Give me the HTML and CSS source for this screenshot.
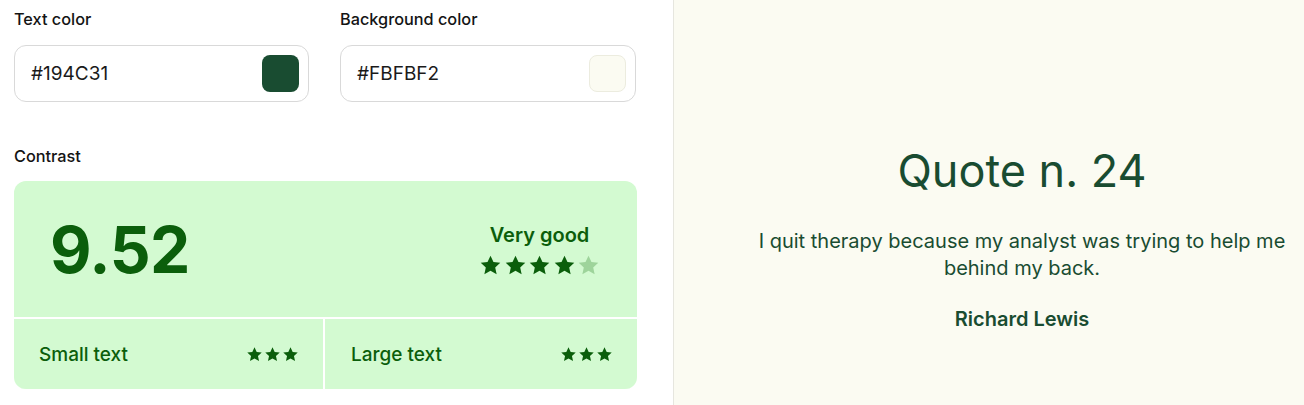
FILE: index.html
```html
<!DOCTYPE html>
<html>
<head>
<meta charset="utf-8">
<link rel="stylesheet" href="styles.css">
</head>
<body>
<div class="page">
  <section class="controls">
    <div class="fields">
      <div class="field">
        <label class="label">Text color</label>
        <div class="input">
          <span class="hex">#194C31</span>
          <span class="swatch swatch-text"></span>
        </div>
      </div>
      <div class="field">
        <label class="label">Background color</label>
        <div class="input">
          <span class="hex">#FBFBF2</span>
          <span class="swatch swatch-bg"></span>
        </div>
      </div>
    </div>
    <div class="label contrast-label">Contrast</div>
    <div class="card">
      <div class="card-top">
        <div class="ratio">9.52</div>
        <div class="rating">
          <div class="rating-text">Very good</div>
          <div class="stars big">
            <svg viewBox="0 0 24 24"><path d="M12 1.8l3.1 6.6 7.1.8-5.3 4.9 1.5 7.1L12 17.6l-6.4 3.6 1.5-7.1-5.3-4.9 7.1-.8z"/></svg>
            <svg viewBox="0 0 24 24"><path d="M12 1.8l3.1 6.6 7.1.8-5.3 4.9 1.5 7.1L12 17.6l-6.4 3.6 1.5-7.1-5.3-4.9 7.1-.8z"/></svg>
            <svg viewBox="0 0 24 24"><path d="M12 1.8l3.1 6.6 7.1.8-5.3 4.9 1.5 7.1L12 17.6l-6.4 3.6 1.5-7.1-5.3-4.9 7.1-.8z"/></svg>
            <svg viewBox="0 0 24 24"><path d="M12 1.8l3.1 6.6 7.1.8-5.3 4.9 1.5 7.1L12 17.6l-6.4 3.6 1.5-7.1-5.3-4.9 7.1-.8z"/></svg>
            <svg class="off" viewBox="0 0 24 24"><path d="M12 1.8l3.1 6.6 7.1.8-5.3 4.9 1.5 7.1L12 17.6l-6.4 3.6 1.5-7.1-5.3-4.9 7.1-.8z"/></svg>
          </div>
        </div>
      </div>
      <div class="card-bottom">
        <div class="cell">
          <span class="cell-text">Small text</span>
          <div class="stars small">
            <svg viewBox="0 0 24 24"><path d="M12 1.8l3.1 6.6 7.1.8-5.3 4.9 1.5 7.1L12 17.6l-6.4 3.6 1.5-7.1-5.3-4.9 7.1-.8z"/></svg>
            <svg viewBox="0 0 24 24"><path d="M12 1.8l3.1 6.6 7.1.8-5.3 4.9 1.5 7.1L12 17.6l-6.4 3.6 1.5-7.1-5.3-4.9 7.1-.8z"/></svg>
            <svg viewBox="0 0 24 24"><path d="M12 1.8l3.1 6.6 7.1.8-5.3 4.9 1.5 7.1L12 17.6l-6.4 3.6 1.5-7.1-5.3-4.9 7.1-.8z"/></svg>
          </div>
        </div>
        <div class="cell">
          <span class="cell-text">Large text</span>
          <div class="stars small">
            <svg viewBox="0 0 24 24"><path d="M12 1.8l3.1 6.6 7.1.8-5.3 4.9 1.5 7.1L12 17.6l-6.4 3.6 1.5-7.1-5.3-4.9 7.1-.8z"/></svg>
            <svg viewBox="0 0 24 24"><path d="M12 1.8l3.1 6.6 7.1.8-5.3 4.9 1.5 7.1L12 17.6l-6.4 3.6 1.5-7.1-5.3-4.9 7.1-.8z"/></svg>
            <svg viewBox="0 0 24 24"><path d="M12 1.8l3.1 6.6 7.1.8-5.3 4.9 1.5 7.1L12 17.6l-6.4 3.6 1.5-7.1-5.3-4.9 7.1-.8z"/></svg>
          </div>
        </div>
      </div>
    </div>
  </section>
  <section class="preview">
    <div class="preview-inner">
      <h1 class="title">Quote n. 24</h1>
      <p class="quote">I quit therapy because my analyst was trying to help me behind my back.</p>
      <p class="author">Richard Lewis</p>
    </div>
  </section>
</div>
</body>
</html>
```

FILE: styles.css
```css
* { box-sizing: border-box; }
html, body { margin: 0; padding: 0; }
body {
  font-family: Inter, "Noto Sans", "Liberation Sans", sans-serif;
  background: #ffffff;
  color: #111111;
  width: 1304px;
  height: 405px;
  overflow: hidden;
}
.page {
  display: flex;
  height: 405px;
}
.controls {
  width: 674px;
  flex: none;
  padding: 8px 36px 0 14px;
  border-right: 1px solid #e6e6df;
  background: #ffffff;
}
.fields {
  display: grid;
  grid-template-columns: 295px 296px;
  column-gap: 31px;
}
.label {
  display: block;
  font-size: 16.3px;
  font-weight: 500;
  line-height: 22px;
  color: #141414;
}
.input {
  margin-top: 15px;
  height: 57px;
  border: 1px solid #d9d9d9;
  border-radius: 12px;
  display: flex;
  align-items: center;
  justify-content: space-between;
  padding: 0 9px 0 16px;
}
.hex {
  font-size: 19px;
  color: #1a1a1a;
}
.swatch {
  width: 37px;
  height: 37px;
  border-radius: 8px;
}
.swatch-text { background: #194C31; }
.swatch-bg { background: #FBFBF2; border: 1px solid #ececdf; }
.contrast-label {
  margin-top: 43px;
}
.card {
  margin-top: 14px;
  width: 623px;
  height: 208px;
  background: #d3fad1;
  border-radius: 12px;
  overflow: hidden;
  display: flex;
  flex-direction: column;
  color: #0b5e0b;
}
.card-top {
  height: 138px;
  display: flex;
  align-items: center;
  justify-content: space-between;
  padding: 0 37px 0 36px;
  border-bottom: 2px solid #ffffff;
  flex: none;
}
.ratio {
  font-size: 64px;
  font-weight: 700;
  letter-spacing: -0.5px;
  line-height: 1;
  margin-top: 2px;
}
.rating {
  display: flex;
  flex-direction: column;
  align-items: center;
  margin-top: 2px;
}
.rating-text {
  font-size: 20px;
  font-weight: 600;
  line-height: 24px;
}
.stars {
  display: flex;
}
.stars svg { fill: #0b5e0b; display: block; }
.stars svg.off { fill: #9ed49b; }
.stars.big { gap: 1.5px; margin-top: 7px; }
.stars.big svg { width: 23px; height: 23px; }
.stars.small { gap: 1px; }
.stars.small svg { width: 17px; height: 17px; }
.card-bottom {
  flex: 1;
  display: grid;
  grid-template-columns: 309px 1fr;
  column-gap: 2px;
  background: #ffffff;
}
.cell {
  background: #d3fad1;
  display: flex;
  align-items: center;
  justify-content: space-between;
  padding: 0 24px 0 25px;
}
.cell + .cell { padding-left: 26px; }
.cell-text {
  font-size: 19px;
  font-weight: 500;
}
.preview {
  flex: 1;
  background: #FBFBF2;
  color: #194C31;
  padding: 143px 0 0 66px;
}
.preview-inner {
  width: 564px;
  text-align: center;
}
.title {
  margin: 0;
  font-size: 45px;
  font-weight: 400;
  line-height: 56px;
}
.quote {
  margin: 29px 0 0;
  font-size: 20px;
  line-height: 27px;
}
.author {
  margin: 24px 0 0;
  font-size: 20px;
  font-weight: 600;
  line-height: 27px;
}
```
